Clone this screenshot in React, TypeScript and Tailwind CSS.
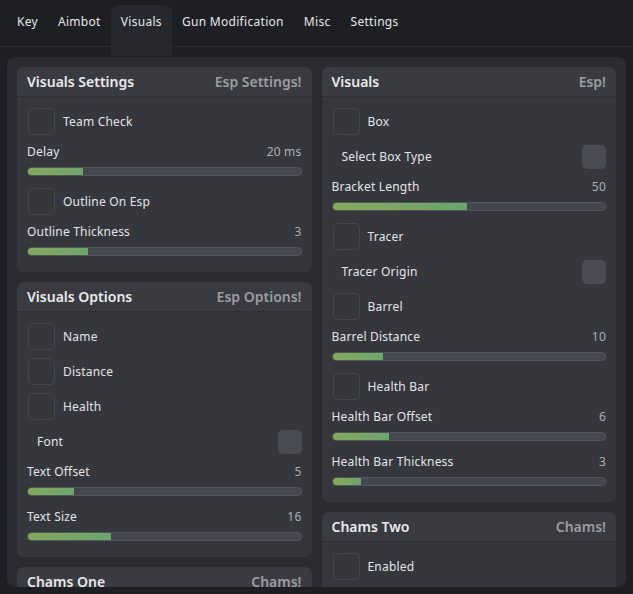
import React from "react";

type Item =
  | { kind: "check"; label: string }
  | { kind: "drop"; label: string }
  | { kind: "slider"; label: string; value: string; pct: number };

type Section = { title: string; tag: string; items: Item[] };

const LEFT: Section[] = [
  {
    title: "Visuals Settings",
    tag: "Esp Settings!",
    items: [
      { kind: "check", label: "Team Check" },
      { kind: "slider", label: "Delay", value: "20 ms", pct: 20 },
      { kind: "check", label: "Outline On Esp" },
      { kind: "slider", label: "Outline Thickness", value: "3", pct: 22 },
    ],
  },
  {
    title: "Visuals Options",
    tag: "Esp Options!",
    items: [
      { kind: "check", label: "Name" },
      { kind: "check", label: "Distance" },
      { kind: "check", label: "Health" },
      { kind: "drop", label: "Font" },
      { kind: "slider", label: "Text Offset", value: "5", pct: 16.7 },
      { kind: "slider", label: "Text Size", value: "16", pct: 30.5 },
    ],
  },
  {
    title: "Chams One",
    tag: "Chams!",
    items: [{ kind: "check", label: "Enabled" }],
  },
];

const RIGHT: Section[] = [
  {
    title: "Visuals",
    tag: "Esp!",
    items: [
      { kind: "check", label: "Box" },
      { kind: "drop", label: "Select Box Type" },
      { kind: "slider", label: "Bracket Length", value: "50", pct: 49.3 },
      { kind: "check", label: "Tracer" },
      { kind: "drop", label: "Tracer Origin" },
      { kind: "check", label: "Barrel" },
      { kind: "slider", label: "Barrel Distance", value: "10", pct: 18.5 },
      { kind: "check", label: "Health Bar" },
      { kind: "slider", label: "Health Bar Offset", value: "6", pct: 20.7 },
      { kind: "slider", label: "Health Bar Thickness", value: "3", pct: 10.5 },
    ],
  },
  {
    title: "Chams Two",
    tag: "Chams!",
    items: [
      { kind: "check", label: "Enabled" },
      { kind: "check", label: "Visible Only" },
    ],
  },
];

const TABS = ["Key", "Aimbot", "Visuals", "Gun Modification", "Misc", "Settings"];

function Row({ item }: { item: Item }) {
  if (item.kind === "check") {
    return (
      <div className="flex h-[27px] items-center gap-[8px] pl-px">
        <div className="h-[27px] w-[27px] rounded-[5px] border border-[#45474d]" />
        <span className="text-[12px] tracking-[0.2px] text-[#e4e4e6]">{item.label}</span>
      </div>
    );
  }
  if (item.kind === "drop") {
    return (
      <div className="flex h-[27px] items-center justify-between pl-[10px]">
        <span className="text-[12px] tracking-[0.2px] text-[#e4e4e6]">{item.label}</span>
        <div className="h-[24px] w-[24px] rounded-[5px] bg-[#4a4c53]" />
      </div>
    );
  }
  return (
    <div className="flex h-[37px] flex-col pb-[4px]">
      <div className="flex h-[18px] items-center justify-between">
        <span className="text-[12px] tracking-[0.2px] text-[#e4e4e6]">{item.label}</span>
        <span className="text-[12px] tracking-[0.2px] text-[#adaeb1]">{item.value}</span>
      </div>
      <div className="mt-[6px] h-[9px] w-full overflow-hidden rounded-full border border-[#54565d] bg-[#45474e]">
        <div
          className="h-full bg-gradient-to-r from-[#84a95a] to-[#6ca56c]"
          style={{ width: `${item.pct}%` }}
        />
      </div>
    </div>
  );
}

function Panel({ section }: { section: Section }) {
  return (
    <div className="overflow-hidden rounded-[7px] bg-[#35373d]">
      <div className="flex h-[30px] items-center justify-between border-b border-dotted border-[#26272b] bg-[#393b41] px-[10px]">
        <span className="text-[14px] font-semibold text-[#e9e9ea]">{section.title}</span>
        <span className="text-[14px] font-semibold text-[#9c9da0]">{section.tag}</span>
      </div>
      <div className="flex flex-col gap-[8px] px-[10px] pb-[12px] pt-[11px]">
        {section.items.map((it, i) => (
          <Row key={i} item={it} />
        ))}
      </div>
    </div>
  );
}

export default function App() {
  return (
    <div
      className="h-[594px] w-[633px] overflow-hidden bg-[#1e1f23]"
      style={{ fontFamily: '"Noto Sans", "Open Sans", sans-serif' }}
    >
      <div className="flex h-[47px] items-start border-b border-[#2f3035] px-[7px] pt-[5px]">
        {TABS.map((t) => (
          <div
            key={t}
            className={
              t === "Visuals"
                ? "relative z-10 h-[51px] rounded-t-[8px] bg-[#27282d] px-[10px] text-[12px] leading-[34px] tracking-[0.3px] text-[#e6e6e8]"
                : "h-[34px] px-[10px] text-[12px] leading-[34px] tracking-[0.3px] text-[#e6e6e8]"
            }
          >
            {t}
          </div>
        ))}
      </div>
      <div className="mx-[7px] mt-[10px] h-[530px] overflow-hidden rounded-[8px] bg-[#2b2c31] p-[10px]">
        <div className="grid grid-cols-2 gap-[10px]">
          <div className="flex flex-col gap-[10px]">
            {LEFT.map((s) => (
              <Panel key={s.title} section={s} />
            ))}
          </div>
          <div className="flex flex-col gap-[10px]">
            {RIGHT.map((s) => (
              <Panel key={s.title} section={s} />
            ))}
          </div>
        </div>
      </div>
    </div>
  );
}
